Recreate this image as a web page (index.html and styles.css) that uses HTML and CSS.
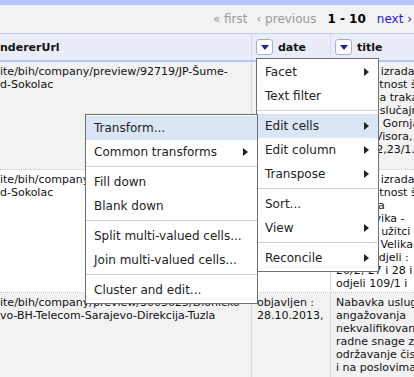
FILE: index.html
```html
<!DOCTYPE html>
<html lang="en">
<head>
<meta charset="UTF-8">
<title>Data table</title>
<link rel="stylesheet" href="styles.css">
</head>
<body>
<div class="topbar"></div>

<div class="pager">
  <span class="pg-off">« first</span>
  <span class="pg-off pg-prev">‹ previous</span>
  <span class="pg-range">1 - 10</span>
  <a class="pg-next" href="#">next ›</a>
</div>

<div class="table">
  <div class="row head">
    <div class="cell">ndererUrl</div>
    <div class="cell"><span class="drop"></span>date</div>
    <div class="cell"><span class="drop"></span>title</div>
  </div>

  <div class="row body-row odd r1">
    <div class="cell">ite/bih/company/preview/92719/JP-Šume-<br>d-Sokolac</div>
    <div class="cell">objavljen :<br>28.10.2013,</div>
    <div class="cell">Usluga: izrada,<br>i kvalitetnost šuma<br>i zaštitna traka<br>i izrada slučajnih<br>užitaka, Gornja<br>Gorica-Visora,<br>odjeli 22,23/1.</div>
  </div>

  <div class="row body-row r2">
    <div class="cell">ite/bih/company/preview/92717/JP-Šume-<br>d-Sokolac</div>
    <div class="cell">objavljen :<br>28.10.2013,</div>
    <div class="cell">Usluga: izrada,<br>i kvalitetnost šuma<br>i šumska<br>i Gostovika -<br>slučajni užitci<br>i Ravna Velika<br>Kozja, odjeli :<br>20/2, 27 i 28 i<br>odjeli 109/1 i</div>
  </div>

  <div class="row body-row odd r3">
    <div class="cell">ite/bih/company/preview/3005025/Dionicko<br>vo-BH-Telecom-Sarajevo-Direkcija-Tuzla</div>
    <div class="cell">objavljen :<br>28.10.2013,</div>
    <div class="cell">Nabavka usluga<br>angažovanja<br>nekvalifikovane<br>radne snage za<br>održavanje čistoće<br>i na poslovima</div>
  </div>
</div>

<div class="menu col-menu">
  <div class="item">Facet<span class="arrow"></span></div>
  <div class="item">Text filter</div>
  <div class="sep"></div>
  <div class="item active">Edit cells<span class="arrow"></span></div>
  <div class="item">Edit column<span class="arrow"></span></div>
  <div class="item">Transpose<span class="arrow"></span></div>
  <div class="sep"></div>
  <div class="item">Sort...</div>
  <div class="item">View<span class="arrow"></span></div>
  <div class="sep"></div>
  <div class="item">Reconcile<span class="arrow"></span></div>
</div>

<div class="menu sub-menu">
  <div class="item active">Transform...</div>
  <div class="item">Common transforms<span class="arrow"></span></div>
  <div class="sep"></div>
  <div class="item">Fill down</div>
  <div class="item">Blank down</div>
  <div class="sep"></div>
  <div class="item">Split multi-valued cells...</div>
  <div class="item">Join multi-valued cells...</div>
  <div class="sep"></div>
  <div class="item">Cluster and edit...</div>
</div>
</body>
</html>
```

FILE: styles.css
```css
body {
  margin: 0;
  width: 414px;
  height: 377px;
  overflow: hidden;
  position: relative;
  background: #fff;
  color: #111;
  font-family: "DejaVu Sans", Verdana, sans-serif;
  font-size: 11px;
}

.topbar {
  height: 5px;
  background: #b5c6f8;
}

/* pagination strip */
.pager {
  height: 29px;
  box-sizing: border-box;
  border-bottom: 1px solid #c2d0f6;
  background: #f2f2f2;
  display: flex;
  justify-content: flex-end;
  align-items: center;
  padding-right: 2px;
  font-size: 12px;
}

.pg-off {
  color: #9a9a9a;
}

.pg-prev {
  margin-left: 9px;
}

.pg-range {
  margin-left: 11px;
  font-weight: bold;
  color: #000;
}

.pg-next {
  margin-left: 11px;
  color: #2222c8;
  text-decoration: none;
}

/* data grid */
.row {
  display: grid;
  grid-template-columns: 251px 79px 1fr;
  box-sizing: border-box;
  overflow: hidden;
}

.row > .cell + .cell {
  border-left: 1px solid #dcdcdc;
}

.head {
  height: 28px;
  background: #eaedf8;
  border-bottom: 2px solid #b5c6f8;
}

.head .cell {
  display: flex;
  align-items: center;
  padding-left: 4px;
  font-weight: bold;
  white-space: nowrap;
  overflow: hidden;
}

.head .cell:first-child {
  padding-left: 0;
}

.row.head > .cell + .cell {
  border-left-color: #d2d9ef;
}

.drop {
  width: 15px;
  height: 14px;
  margin-right: 5px;
  border: 1px solid #9fb0e6;
  border-radius: 3px;
  background: #fff;
  display: flex;
  justify-content: center;
  align-items: center;
}

.drop::after {
  content: "";
  border-left: 4.5px solid transparent;
  border-right: 4.5px solid transparent;
  border-top: 5px solid #1f1fae;
}

.body-row {
  border-bottom: 1px dotted #c8c8c8;
}

.body-row .cell {
  padding: 3px 5px;
  white-space: nowrap;
  overflow: hidden;
}

.body-row .cell:first-child {
  padding-left: 0;
}

.odd {
  background: #f2f2f2;
}

.r1 { height: 108px; }
.r2 { height: 123px; }
.r3 { height: 90px; }

/* drop-down menus */
.menu {
  position: absolute;
  background: #fff;
  border: 1px solid #707070;
  padding: 1px 0;
  color: #222;
  font-size: 12px;
  z-index: 10;
}

.col-menu {
  left: 256px;
  top: 58px;
  width: 121px;
}

.sub-menu {
  left: 85px;
  top: 114px;
  width: 171px;
  z-index: 11;
}

.item {
  height: 24px;
  line-height: 14px;
  box-sizing: border-box;
  padding: 5px 9px 5px 8px;
  display: flex;
  justify-content: space-between;
  align-items: center;
  white-space: nowrap;
}

.item.active {
  background: #dae5f5;
}

.arrow {
  border-top: 4px solid transparent;
  border-bottom: 4px solid transparent;
  border-left: 5px solid #222;
}

.sep {
  border-top: 1px solid #cfcfcf;
  margin: 2px 0 3px;
}
```
